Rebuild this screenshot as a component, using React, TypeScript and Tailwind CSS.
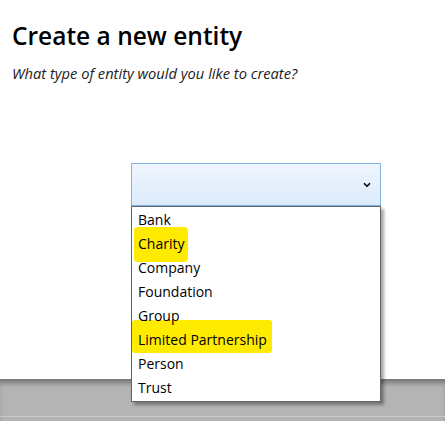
import { ChevronDown } from "lucide-react";

type EntityType = {
  name: string;
  // marker highlight box, relative to the row
  mark?: string;
};

const entityTypes: EntityType[] = [
  { name: "Bank" },
  { name: "Charity", mark: "left-[2px] top-[-5px] w-[54px] h-[35px] rounded-[4px]" },
  { name: "Company" },
  { name: "Foundation" },
  { name: "Group" },
  { name: "Limited Partnership", mark: "left-0 top-[-8px] w-[140px] h-[33px] rounded-[3px]" },
  { name: "Person" },
  { name: "Trust" },
];

export default function App() {
  return (
    <div className="relative flex flex-col h-[421px] w-[445px] overflow-hidden bg-white text-black font-['Open_Sans',sans-serif]">
      {/* Heading */}
      <div className="px-3 pt-[19px]">
        <h1 className="text-[24.5px] leading-[34px] font-semibold">Create a new entity</h1>
        <p className="mt-[10px] text-[14.7px] leading-[20px] italic text-[#222]">
          What type of entity would you like to create?
        </p>
      </div>

      {/* Select */}
      <div className="relative ml-[131px] mt-[80px] w-[250px]">
        <div className="flex items-center justify-end h-[43px] pr-[8px] border border-[#7eb4ea] bg-gradient-to-b from-[#eef5fd] to-[#dcebfc]">
          <ChevronDown className="w-[10px] h-[10px] text-black" strokeWidth={4} />
        </div>

        {/* Open list */}
        <ul className="absolute left-0 top-[43px] z-10 w-[250px] border border-[#646464] bg-white shadow-[3px_3px_3px_rgba(0,0,0,0.35)] py-[1px] text-[14px]">
          {entityTypes.map((item) => (
            <li key={item.name} className="relative h-[24px] leading-[24px] pl-[6px]">
              {item.mark && <span className={`absolute z-0 bg-[#ffeb00] ${item.mark}`} />}
              <span className="relative z-[1]">{item.name}</span>
            </li>
          ))}
        </ul>
      </div>

      {/* Bottom bar */}
      <div className="mt-auto h-[42px] bg-[#b4b4b4] shadow-[inset_0_6px_5px_-2px_rgba(0,0,0,0.35)] flex flex-col justify-end">
        <div className="h-[5px] border-t border-[#c9c9c9]" />
      </div>
    </div>
  );
}
